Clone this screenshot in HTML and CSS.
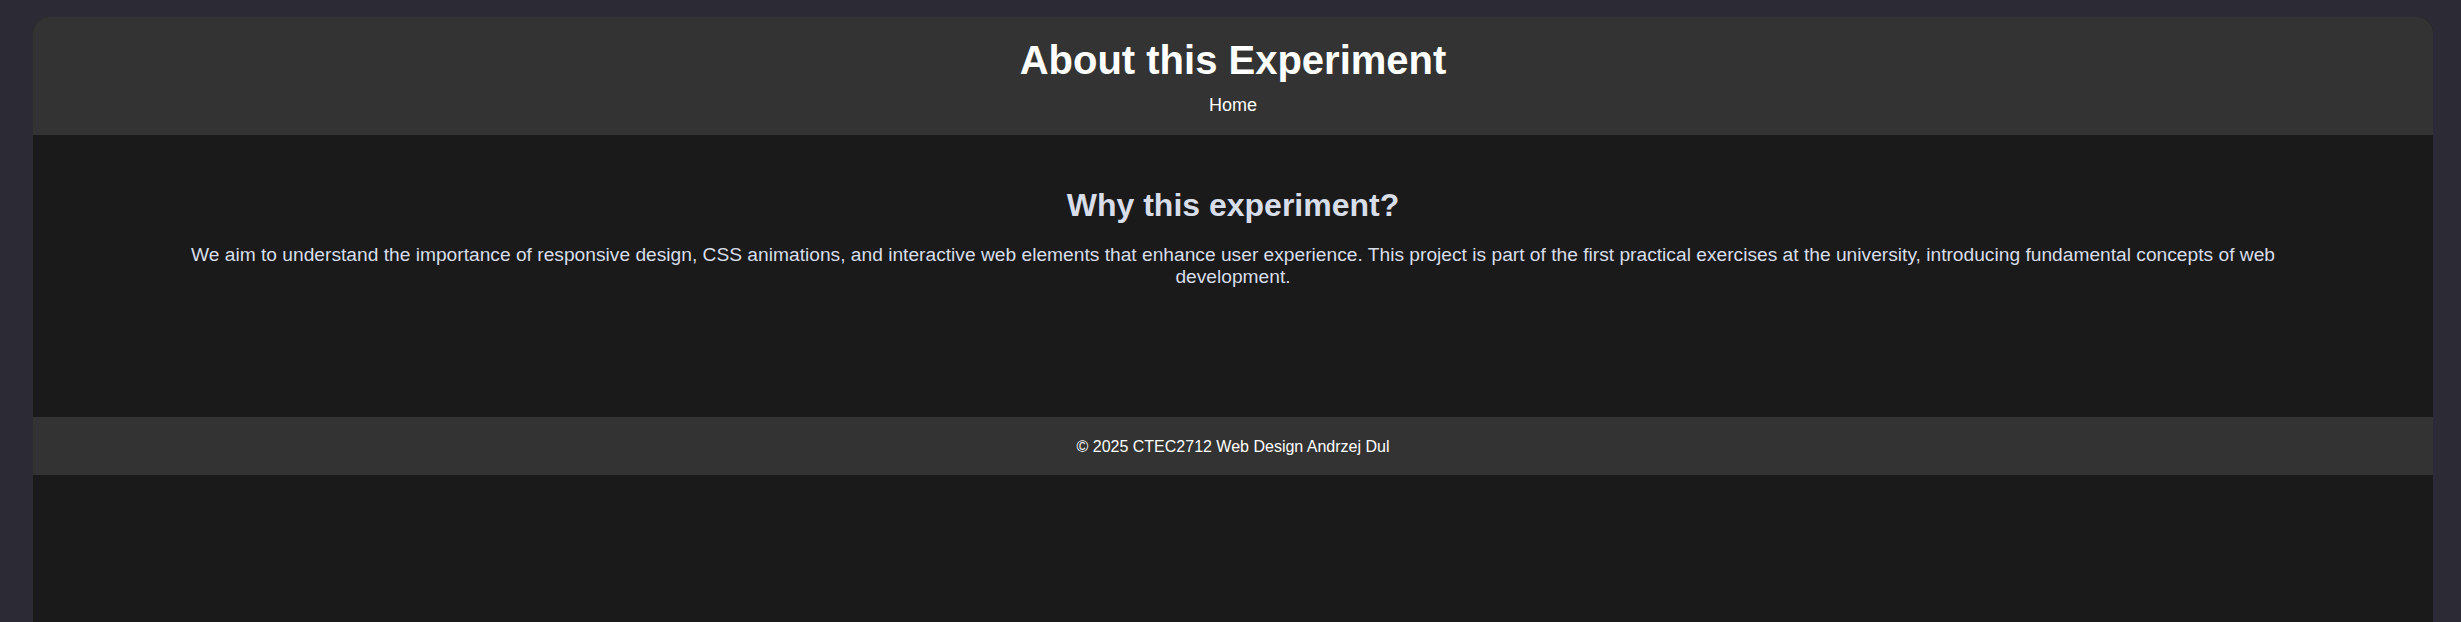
FILE: index.html
```html
<!DOCTYPE html>
<html lang="en">
<head>
<meta charset="utf-8">
<title>About this Experiment</title>
<link rel="stylesheet" href="styles.css">
</head>
<body>
<div class="page">
  <header class="site-header">
    <h1 class="site-title">About this Experiment</h1>
    <nav class="site-nav"><a class="nav-link" href="#">Home</a></nav>
  </header>
  <main class="content">
    <section class="about">
      <h2 class="about-title">Why this experiment?</h2>
      <p class="about-text">We aim to understand the importance of responsive design, CSS animations, and interactive web elements that enhance user experience. This project is part of the first practical exercises at the university, introducing fundamental concepts of web development.</p>
    </section>
  </main>
  <footer class="site-footer">
    <p class="footer-text">&copy; 2025 CTEC2712 Web Design Andrzej Dul</p>
  </footer>
</div>
</body>
</html>
```
FILE: styles.css
```css
html, body {
  margin: 0;
  background: #2b2a35;
}
body {
  padding: 17px 28px 0 33px;
  font-family: "Liberation Sans", Arial, sans-serif;
  overflow: hidden;
}
.page {
  width: 2400px;
  min-height: 100vh;
  background: #1a1a1a;
  border-radius: 16px 16px 0 0;
  overflow: hidden;
  display: flex;
  flex-direction: column;
}
.site-header {
  background: #333333;
  padding: 21px 20px 19px;
  text-align: center;
  color: #ffffff;
}
.site-title {
  margin: 0 0 12px;
  font-size: 40px;
  font-weight: bold;
}
.site-nav {
  font-size: 18px;
}
.nav-link {
  color: #ffffff;
  text-decoration: none;
}
.content {
  height: 282px;
  box-sizing: border-box;
  padding: 52px 120px 0;
  text-align: center;
}
.about-title {
  margin: 0 0 20px;
  font-size: 32px;
  font-weight: bold;
  color: #d8dee9;
}
.about-text {
  margin: 0;
  font-size: 19.2px;
  color: #d8dee9;
}
.site-footer {
  background: #333333;
  padding: 21px 20px 19px;
  text-align: center;
  color: #ffffff;
}
.footer-text {
  margin: 0;
  font-size: 16px;
}
```
